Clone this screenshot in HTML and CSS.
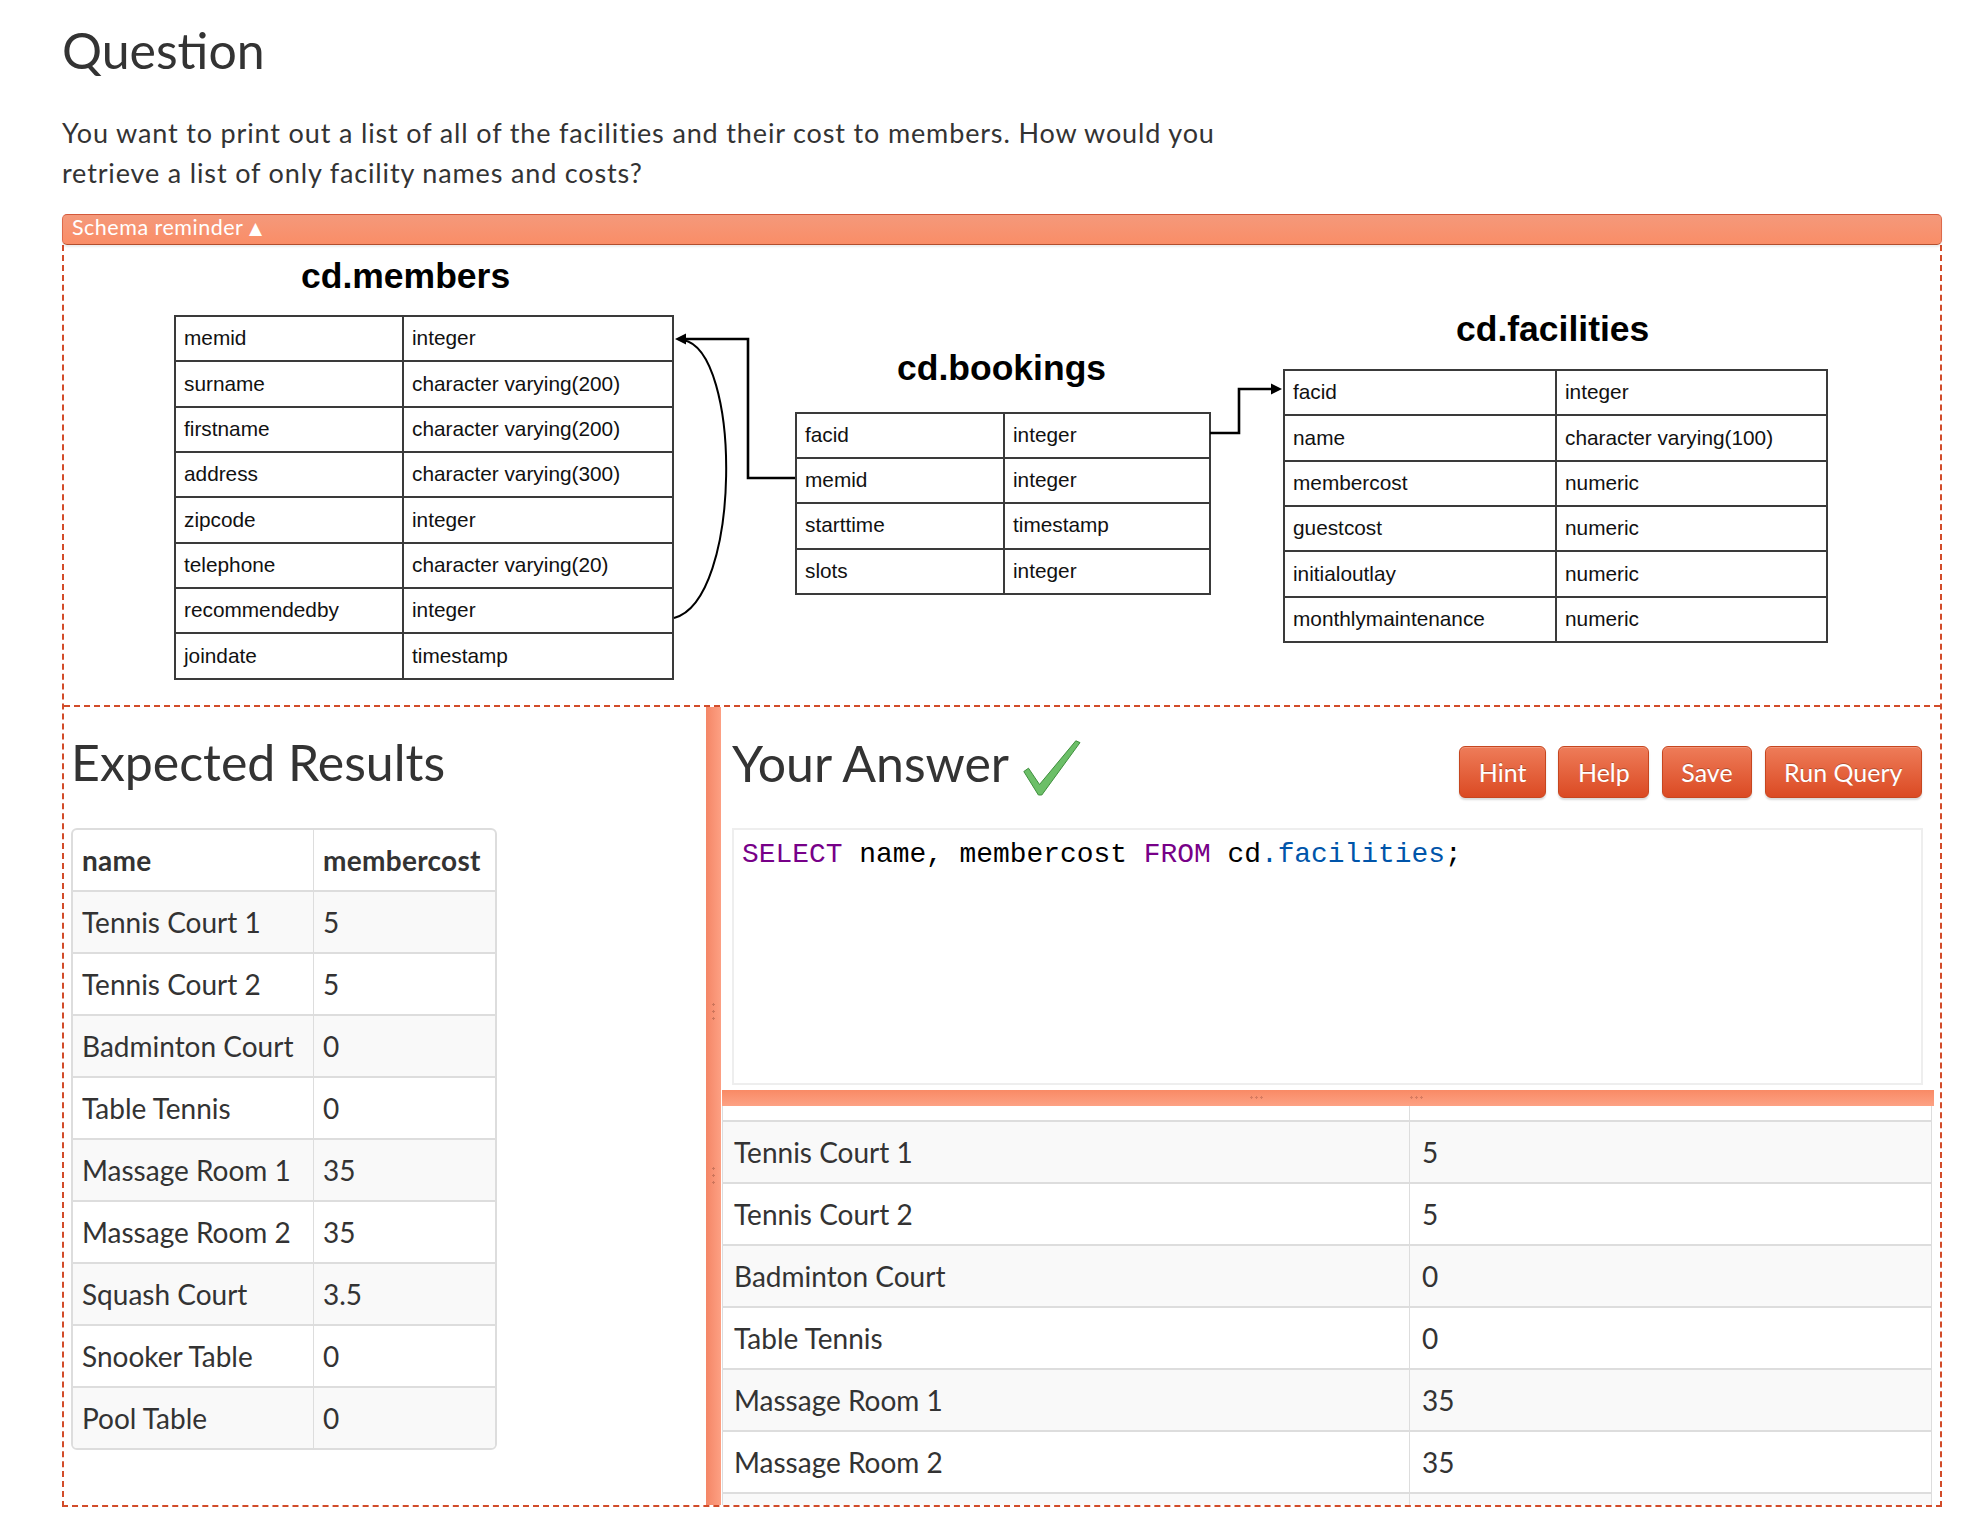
FILE: index.html
```html
<!DOCTYPE html>
<html lang="en">
<head>
<meta charset="utf-8">
<title>Question</title>
<link rel="stylesheet" href="styles.css">
</head>
<body>
<div class="page">
  <h1 class="title">Question</h1>
  <p class="prompt">You want to print out a list of all of the facilities and their cost to members. How would you retrieve a list of only facility names and costs?</p>

  <div class="schema-bar">Schema reminder <span class="caret">&#9650;</span></div>

  <div class="workspace">
    <div class="diagram">
      <div class="dtitle t-members">cd.members</div>
      <table class="dtable tb-members">
        <tr><td>memid</td><td>integer</td></tr>
        <tr><td>surname</td><td>character varying(200)</td></tr>
        <tr><td>firstname</td><td>character varying(200)</td></tr>
        <tr><td>address</td><td>character varying(300)</td></tr>
        <tr><td>zipcode</td><td>integer</td></tr>
        <tr><td>telephone</td><td>character varying(20)</td></tr>
        <tr><td>recommendedby</td><td>integer</td></tr>
        <tr><td>joindate</td><td>timestamp</td></tr>
      </table>

      <div class="dtitle t-bookings">cd.bookings</div>
      <table class="dtable tb-bookings">
        <tr><td>facid</td><td>integer</td></tr>
        <tr><td>memid</td><td>integer</td></tr>
        <tr><td>starttime</td><td>timestamp</td></tr>
        <tr><td>slots</td><td>integer</td></tr>
      </table>

      <div class="dtitle t-facilities">cd.facilities</div>
      <table class="dtable tb-facilities">
        <tr><td>facid</td><td>integer</td></tr>
        <tr><td>name</td><td>character varying(100)</td></tr>
        <tr><td>membercost</td><td>numeric</td></tr>
        <tr><td>guestcost</td><td>numeric</td></tr>
        <tr><td>initialoutlay</td><td>numeric</td></tr>
        <tr><td>monthlymaintenance</td><td>numeric</td></tr>
      </table>

      <svg class="links" viewBox="64 245 1876 460" width="1876" height="460" aria-hidden="true">
        <path d="M674 618 C742 600, 742 350, 683 340" fill="none" stroke="#000" stroke-width="2"/>
        <path d="M795 478 H748 V339 H683" fill="none" stroke="#000" stroke-width="2.6"/>
        <polygon points="675,339 686,333.5 686,344.5" fill="#000"/>
        <path d="M1210 433 H1239 V389 H1273" fill="none" stroke="#000" stroke-width="2.6"/>
        <polygon points="1282,389 1271,383.5 1271,394.5" fill="#000"/>
      </svg>
    </div>

    <div class="lower">
      <section class="expected">
        <h2 class="pane-title">Expected Results</h2>
        <table class="results">
          <tr class="head"><td>name</td><td>membercost</td></tr>
          <tr class="odd"><td>Tennis Court 1</td><td>5</td></tr>
          <tr><td>Tennis Court 2</td><td>5</td></tr>
          <tr class="odd"><td>Badminton Court</td><td>0</td></tr>
          <tr><td>Table Tennis</td><td>0</td></tr>
          <tr class="odd"><td>Massage Room 1</td><td>35</td></tr>
          <tr><td>Massage Room 2</td><td>35</td></tr>
          <tr class="odd"><td>Squash Court</td><td>3.5</td></tr>
          <tr><td>Snooker Table</td><td>0</td></tr>
          <tr class="odd"><td>Pool Table</td><td>0</td></tr>
        </table>
      </section>

      <div class="vsplit"><span class="vgrip g1"></span><span class="vgrip g2"></span></div>

      <section class="answer">
        <div class="answer-head">
          <h2 class="pane-title">Your Answer <svg class="check" viewBox="0 0 58 56" width="58" height="56" aria-hidden="true"><path d="M0.8 31.5 L5.5 28.2 L16.5 44.5 L52.8 0.8 L57 2.6 L18.8 55 L15.4 55 Z" fill="#6cbf68" stroke="#3f8f3d" stroke-width="1" stroke-linejoin="round"/></svg></h2>
          <div class="actions">
            <button class="btn">Hint</button>
            <button class="btn">Help</button>
            <button class="btn">Save</button>
            <button class="btn">Run Query</button>
          </div>
        </div>
        <div class="editor">
          <pre class="code"><span class="kw">SELECT</span> name, membercost <span class="kw">FROM</span> cd<span class="var">.facilities</span>;</pre>
        </div>
        <div class="hsplit"><span class="hgrip h1"></span><span class="hgrip h2"></span></div>
        <div class="output">
          <table class="out">
            <tr class="blank"><td></td><td></td></tr>
            <tr class="odd"><td>Tennis Court 1</td><td>5</td></tr>
            <tr><td>Tennis Court 2</td><td>5</td></tr>
            <tr class="odd"><td>Badminton Court</td><td>0</td></tr>
            <tr><td>Table Tennis</td><td>0</td></tr>
            <tr class="odd"><td>Massage Room 1</td><td>35</td></tr>
            <tr><td>Massage Room 2</td><td>35</td></tr>
            <tr class="odd"><td></td><td></td></tr>
          </table>
        </div>
      </section>
    </div>
  </div>
</div>
</body>
</html>
```

FILE: styles.css
```css
html, body {
  margin: 0;
  background: #fff;
}

body {
  font-family: Lato, "Open Sans", "DejaVu Sans", sans-serif;
  color: #333;
}

.page {
  width: 1880px;
  padding-left: 62px;
}

.title {
  margin: 0;
  padding-top: 23px;
  font-size: 50px;
  line-height: 55px;
  font-weight: 400;
}

.prompt {
  margin: 34.5px 0 0;
  max-width: 1200px;
  font-size: 27px;
  line-height: 40px;
  letter-spacing: 0.85px;
}

/* schema reminder bar */
.schema-bar {
  margin-top: 21.5px;
  height: 25px;
  padding: 0 0 4px 9px;
  line-height: 25px;
  font-size: 21.5px;
  letter-spacing: 0.5px;
  color: #fff;
  background: linear-gradient(#f4997b, #fa8d67);
  border: 1px solid #dd6a4b;
  border-top-color: #d4593b;
  border-bottom-color: #b24f2e;
  border-radius: 5px;
  box-shadow: 0 2px 2px rgba(0, 0, 0, 0.08);
  position: relative;
  z-index: 1;
}

.caret {
  font-size: 17px;
  font-family: "DejaVu Sans", sans-serif;
  vertical-align: 1px;
}

.workspace {
  border: 2px dashed #d24c2a;
  border-top: none;
}

/* schema diagram (free canvas) */
.diagram {
  position: relative;
  height: 460px;
  border-bottom: 2px dashed #d24c2a;
}

.dtitle {
  position: absolute;
  font-family: "Liberation Sans", Arial, sans-serif;
  font-weight: 700;
  font-size: 35.5px;
  line-height: 35.5px;
  color: #000;
  white-space: nowrap;
}

.t-members { left: 237px; top: 14px; }
.t-bookings { left: 833px; top: 106px; }
.t-facilities { left: 1392px; top: 67px; }

.dtable {
  position: absolute;
  table-layout: fixed;
  border-collapse: separate;
  border-spacing: 0;
  border-right: 2px solid #3a3a3a;
  border-bottom: 2px solid #3a3a3a;
  font-family: "Liberation Sans", Arial, sans-serif;
  font-size: 20.8px;
  color: #111;
}

.dtable td {
  box-sizing: border-box;
  height: 45.35px;
  padding: 0 0 1px 8px;
  border-top: 2px solid #3a3a3a;
  border-left: 2px solid #3a3a3a;
  vertical-align: middle;
  white-space: nowrap;
}

.tb-members { left: 110px; top: 70px; width: 500px; }
.tb-members td:first-child { width: 228px; }

.tb-bookings { left: 731px; top: 166.5px; width: 416px; }
.tb-bookings td:first-child { width: 208px; }

.tb-facilities { left: 1219px; top: 124px; width: 545px; }
.tb-facilities td:first-child { width: 272px; }

.links {
  position: absolute;
  left: 0;
  top: 0;
  overflow: visible;
}

/* lower workspace */
.lower {
  display: flex;
  height: 798px;
}

.pane-title {
  margin: 0;
  font-size: 50px;
  line-height: 55px;
  font-weight: 400;
  color: #333;
  white-space: nowrap;
}

.expected {
  width: 642px;
  box-sizing: border-box;
  padding: 28px 0 0 7px;
}

.expected .pane-title {
  margin-bottom: 38px;
}

.results,
.out {
  border-collapse: separate;
  border-spacing: 0;
  font-size: 28px;
  color: #333;
}

.results {
  width: 426px;
  table-layout: fixed;
  border: 2px solid #ddd;
  border-radius: 6px;
}

.results td,
.out td {
  box-sizing: content-box;
  height: 60px;
  padding: 0 0 0 9px;
  vertical-align: middle;
  white-space: nowrap;
  border-top: 2px solid #ddd;
}

.results td:first-child { width: 231px; }
.results td + td { border-left: 1px solid #ddd; padding-left: 9px; }
.results tr.head td { border-top: none; font-weight: 700; letter-spacing: 0.3px; }
.results tr.odd td,
.out tr.odd td { background: #f9f9f9; }
.results tr:last-child td:first-child { border-bottom-left-radius: 4px; }
.results tr:last-child td:last-child { border-bottom-right-radius: 4px; }

/* splitters */
.vsplit {
  position: relative;
  width: 15px;
  flex: none;
  background: linear-gradient(to right, #f48666, #fda083);
}

.vgrip {
  position: absolute;
  left: 6px;
  width: 3px;
  height: 20px;
  background: radial-gradient(circle, rgba(150, 80, 60, 0.45) 1px, transparent 1.4px) 0 0 / 3px 7px;
}

.vgrip.g1 { top: 294px; }
.vgrip.g2 { top: 458px; }

.answer {
  flex: 1;
  min-width: 0;
  display: flex;
  flex-direction: column;
}

.answer-head {
  display: flex;
  justify-content: space-between;
  align-items: flex-start;
  padding: 29px 18px 0 11px;
}

.check {
  vertical-align: -14px;
  margin-left: 2px;
}

.actions {
  display: flex;
  gap: 12.5px;
  margin-top: 10px;
}

.btn {
  height: 52px;
  padding: 0 18.5px;
  font-family: Lato, "Open Sans", sans-serif;
  font-size: 25px;
  line-height: 50px;
  color: #fff;
  text-shadow: 0 -1px 0 rgba(0, 0, 0, 0.25);
  background: linear-gradient(#ee7c59, #db4a23);
  border: 1px solid #c6461f;
  border-radius: 6px;
  box-shadow: inset 0 1px 0 rgba(255, 255, 255, 0.2), 0 2px 2px rgba(0, 0, 0, 0.15);
}

.editor {
  height: 253px;
  margin: 30px 17px 0 11px;
  border: 2px solid #eee;
}

.code {
  margin: 0;
  padding: 7.5px 0 0 8px;
  font-family: "Liberation Mono", "Courier New", monospace;
  font-size: 27.9px;
  line-height: 33.4px;
  color: #000;
}

.kw { color: #708; }
.var { color: #05a; }

.hsplit {
  position: relative;
  height: 16px;
  margin: 5px 6px 0 1px;
  background: linear-gradient(#f98a65, #fda284);
}

.hgrip {
  position: absolute;
  top: 6px;
  width: 15px;
  height: 3px;
  background: radial-gradient(circle, rgba(170, 90, 70, 0.45) 1px, transparent 1.4px) 0 0 / 5px 3px;
}

.hgrip.h1 { left: 527px; }
.hgrip.h2 { left: 687px; }

.output {
  flex: 1;
  min-height: 0;
  margin: 0 8px 0 1px;
  overflow: hidden;
}

.out {
  width: 100%;
  table-layout: fixed;
  border-left: 1px solid #ddd;
  border-right: 1px solid #ddd;
}

.out td { padding-left: 11px; }
.out td:first-child { width: 675px; }
.out td + td { border-left: 1px solid #ddd; padding-left: 12px; }
.out tr.blank td { height: 14px; border-top: none; }
```
